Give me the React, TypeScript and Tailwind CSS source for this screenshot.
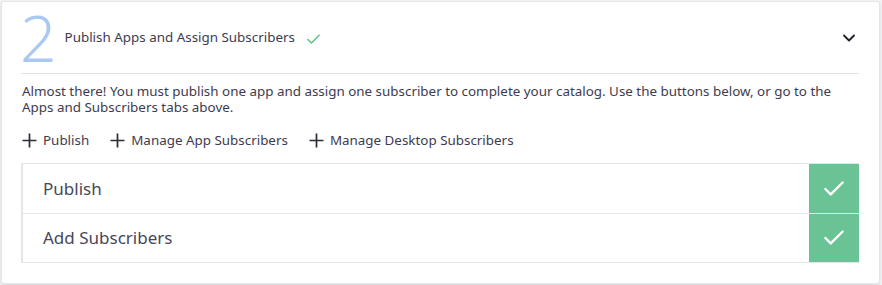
import React from 'react';
import { Check, ChevronDown } from 'lucide-react';

const actions = ['Publish', 'Manage App Subscribers', 'Manage Desktop Subscribers'];
const steps = ['Publish', 'Add Subscribers'];

const PlusIcon = () => (
  <svg width="15" height="15" viewBox="0 0 15 15" className="text-[#2b2b35]">
    <path d="M7.5 0.5v14M0.5 7.5h14" stroke="currentColor" strokeWidth="1.7" fill="none" />
  </svg>
);

const App: React.FC = () => {
  return (
    <div
      className="w-[882px] h-[285px] bg-[#f3f4f6] pl-px pt-px"
      style={{ fontFamily: '"Noto Sans", "Open Sans", sans-serif' }}
    >
      <div className="w-[879px] h-[283px] bg-white border border-[#e4e6ea] rounded-[3px] shadow-sm pl-[19px] pr-[20px]">
        <div className="flex items-center h-[72px] border-b border-[#dfe3e8]">
          <span className="text-[64px] font-light leading-[70px] text-[#a9c8f2] -ml-px">2</span>
          <span className="ml-[8px] text-[13.4px] text-[#3d3b4f]">Publish Apps and Assign Subscribers</span>
          <Check className="ml-[10px] mt-[3px] text-[#5cbf8a]" size={17} strokeWidth={2} />
          <ChevronDown className="ml-auto text-[#1f1f2a]" size={20} strokeWidth={2.2} />
        </div>
        <p className="mt-[9px] text-[13.4px] leading-[16px] text-[#3d3b4f] pl-px pr-4">
          Almost there! You must publish one app and assign one subscriber to complete your catalog. Use the buttons below, or go to the Apps and Subscribers tabs above.
        </p>
        <div className="flex items-center gap-[20px] mt-[15px] h-[20px] text-[13.4px] text-[#3d3b4f]">
          {actions.map((a) => (
            <button key={a} className="flex items-center gap-[6px] pl-px">
              <PlusIcon />
              <span>{a}</span>
            </button>
          ))}
        </div>
        <div className="mt-[13px] border-l-2 border-[#e3e5e8]">
          {steps.map((s, i) => (
            <div
              key={s}
              className={`flex h-[50px] border-t border-[#e3e5e8] ${i === steps.length - 1 ? 'border-b' : ''}`}
            >
              <div className="flex-1 flex items-center pl-[20px] text-[17px] text-[#474759]">{s}</div>
              <div className="w-[50px] bg-[#6ac394] flex items-center justify-center">
                <Check size={26} strokeWidth={2.2} className="text-white" />
              </div>
            </div>
          ))}
        </div>
      </div>
    </div>
  );
};

export default App;
